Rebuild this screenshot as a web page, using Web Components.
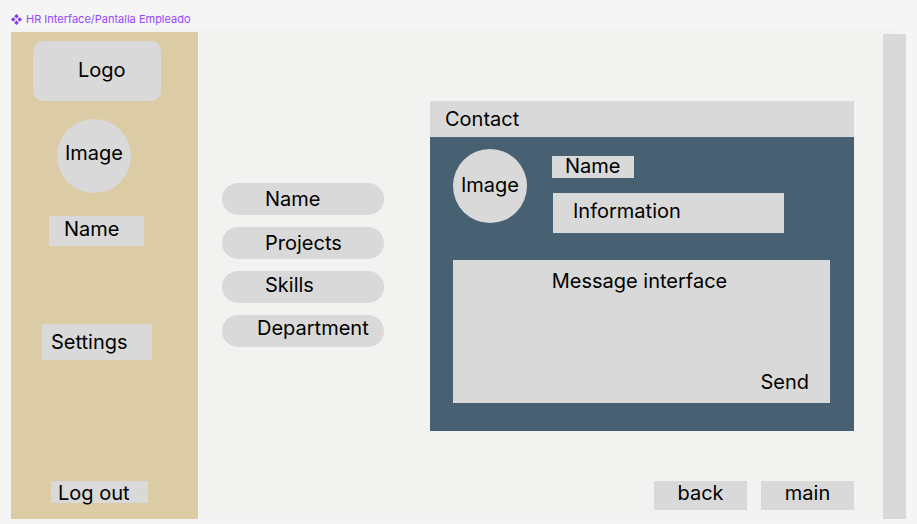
<!DOCTYPE html>
<html lang="es">
<head>
<meta charset="utf-8">
<meta name="viewport" content="width=device-width, initial-scale=1">
<title>HR Interface/Pantalla Empleado</title>
<style>
  body { margin: 0; background: #f5f5f5; font: 20px/20px Inter, "Liberation Sans", sans-serif; color: #000; }
</style>
</head>
<body>
<hr-screen></hr-screen>
<script>
function define(name, html) {
  const template = document.createElement('template');
  template.innerHTML = '<style>*{box-sizing:border-box}</style>' + html;
  customElements.define(name, class extends HTMLElement {
    constructor() {
      super();
      this.attachShadow({ mode: 'open' }).append(template.content.cloneNode(true));
    }
  });
}

/* Flat grey block: a button */
define('hr-button', `
<style>
  :host { display: block; }
  button { display: block; width: 100%; margin: 0; border: 0; padding: var(--pad, 6px); border-radius: var(--radius, 0);
    background: #d9d9d9; color: inherit; font: inherit; text-align: var(--align, left); white-space: nowrap; cursor: pointer; }
</style>
<button type="button"><slot></slot></button>`);

/* Flat grey block: static content */
define('hr-block', `
<style>
  :host { display: block; padding: var(--pad, 6px); border-radius: var(--radius, 0); background: #d9d9d9;
    text-align: var(--align, left); white-space: nowrap; box-sizing: border-box; }
</style>
<slot></slot>`);

define('hr-avatar', `
<style>
  :host { display: block; box-sizing: border-box; width: 74px; height: 74px; border-radius: 50%; background: #d9d9d9;
    padding-top: var(--top, 24px); text-align: center; }
</style>
<slot></slot>`);

define('hr-title', `
<style>
  :host { display: flex; align-items: center; gap: 4px; height: 28px; padding-top: 10px; box-sizing: border-box;
    font-size: 11px; line-height: 18px; color: #9747ff; }
  svg { width: 11px; height: 11px; fill: #8638e5; flex: none; }
  h1 { margin: 0; font: inherit; white-space: nowrap; }
</style>
<svg viewBox="0 0 11 11" aria-hidden="true"><path d="M5.5 0 7.8 2.3 5.5 4.6 3.2 2.3ZM5.5 6.4 7.8 8.7 5.5 11 3.2 8.7ZM2.3 3.2 4.6 5.5 2.3 7.8 0 5.5ZM8.7 3.2 11 5.5 8.7 7.8 6.4 5.5Z"/></svg>
<h1><slot></slot></h1>`);

define('hr-sidebar', `
<style>
  :host { display: flex; flex-direction: column; align-items: flex-start; box-sizing: border-box; padding: 9px 0 16px;
    background: #dccca6; }
  .logo { width: 128px; margin-left: 22px; --pad: 19px 0 21px 45px; --radius: 10px; }
  hr-avatar { margin: 18px 0 0 46px; }
  .name { width: 95px; margin: 23px 0 0 38px; --pad: 3px 0 7px 15px; }
  .settings { width: 110px; margin: 78px 0 0 31px; --pad: 8px 0 8px 9px; }
  .logout { width: 97px; margin: auto 0 0 40px; --pad: 2px 0 0 7px; }
</style>
<hr-block class="logo">Logo</hr-block>
<hr-avatar>Image</hr-avatar>
<hr-block class="name">Name</hr-block>
<hr-button class="settings">Settings</hr-button>
<hr-button class="logout">Log out</hr-button>`);

define('hr-menu', `
<style>
  :host { display: block; }
  nav { display: grid; gap: 12px; --radius: 16px; }
  .name, .projects { --pad: 6px 0 6px 43px; }
  .skills { --pad: 4px 0 8px 43px; }
  .department { --pad: 3px 0 9px 35px; }
</style>
<nav aria-label="Employee">
  <hr-button class="name">Name</hr-button>
  <hr-button class="projects">Projects</hr-button>
  <hr-button class="skills">Skills</hr-button>
  <hr-button class="department">Department</hr-button>
</nav>`);

define('hr-composer', `
<style>
  :host { display: block; }
  form { display: flex; flex-direction: column; background: #d9d9d9; padding: 11px 16px 6px 12px; }
  label { text-align: center; }
  textarea { height: 76px; margin: 0; border: 0; padding: 4px; background: none; font: inherit; resize: none; outline: 0; }
  hr-button { align-self: flex-end; --pad: 5px; }
</style>
<form>
  <label for="message">Message interface</label>
  <textarea id="message"></textarea>
  <hr-button>Send</hr-button>
</form>`);

define('hr-contact', `
<style>
  :host { display: block; background: #476173; }
  h2 { margin: 0; padding: 8px 15px; background: #d9d9d9; font: inherit; }
  .body { padding: 12px 24px 28px 23px; }
  .person { display: flex; gap: 25px; height: 111px; }
  .person hr-avatar { --top: 26px; flex: none; }
  .details { flex: 1; padding-top: 7px; }
  .name { width: 82px; --pad: 0 0 2px 13px; }
  .info { max-width: 231px; margin: 15px 0 0 1px; --pad: 8px 0 12px 20px; }
</style>
<h2>Contact</h2>
<div class="body">
  <div class="person">
    <hr-avatar>Image</hr-avatar>
    <div class="details">
      <hr-block class="name">Name</hr-block>
      <hr-block class="info">Information</hr-block>
    </div>
  </div>
  <hr-composer></hr-composer>
</div>`);

define('hr-scrollbar', `
<style>
  :host { display: block; background: #d9d9d9; }
</style>`);

define('hr-screen', `
<style>
  :host { display: flex; flex-direction: column; min-height: 100vh; box-sizing: border-box; padding: 0 21px 5px 11px; }
  .frame { flex: 1; display: grid; grid-template-columns: 187px minmax(0, 1fr) 23px; background: #f2f2f0; }
  hr-sidebar { margin-top: 4px; }
  main { display: grid; grid-template-columns: 162px minmax(0, 1fr); grid-template-rows: auto 1fr; column-gap: 46px;
    padding: 73px 19px 9px 24px; }
  hr-menu { margin-top: 82px; }
  .actions { grid-column: 1 / -1; align-self: end; display: flex; justify-content: flex-end; gap: 14px;
    --pad: 2px 0 7px; --align: center; }
  .actions hr-button { width: 93px; }
  hr-scrollbar { margin: 6px -10px 0 10px; }
</style>
<hr-title>HR Interface/Pantalla Empleado</hr-title>
<div class="frame">
  <hr-sidebar></hr-sidebar>
  <main>
    <hr-menu></hr-menu>
    <hr-contact></hr-contact>
    <div class="actions">
      <hr-button>back</hr-button>
      <hr-button>main</hr-button>
    </div>
  </main>
  <hr-scrollbar></hr-scrollbar>
</div>`);
</script>
</body>
</html>
